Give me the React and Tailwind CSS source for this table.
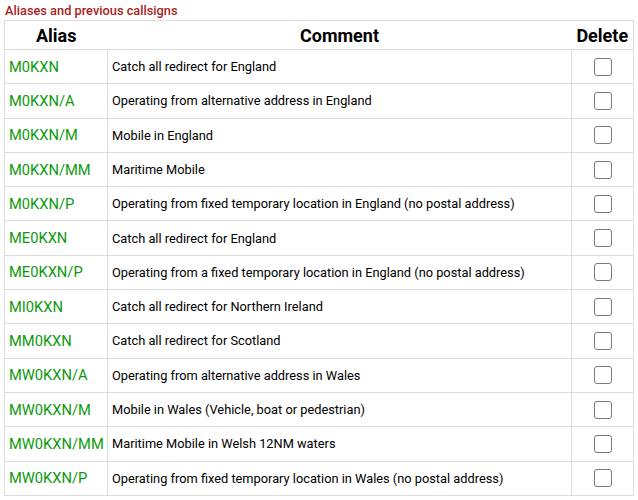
import React from "react";

const rows = [
  ["M0KXN", "Catch all redirect for England"],
  ["M0KXN/A", "Operating from alternative address in England"],
  ["M0KXN/M", "Mobile in England"],
  ["M0KXN/MM", "Maritime Mobile"],
  ["M0KXN/P", "Operating from fixed temporary location in England (no postal address)"],
  ["ME0KXN", "Catch all redirect for England"],
  ["ME0KXN/P", "Operating from a fixed temporary location in England (no postal address)"],
  ["MI0KXN", "Catch all redirect for Northern Ireland"],
  ["MM0KXN", "Catch all redirect for Scotland"],
  ["MW0KXN/A", "Operating from alternative address in Wales"],
  ["MW0KXN/M", "Mobile in Wales (Vehicle, boat or pedestrian)"],
  ["MW0KXN/MM", "Maritime Mobile in Welsh 12NM waters"],
  ["MW0KXN/P", "Operating from fixed temporary location in Wales (no postal address)"],
];

export default function App() {
  return (
    <div className="w-[638px] h-[500px] bg-white font-['Roboto',sans-serif] text-black">
      <div className="pl-[5px] pt-[3px] h-[20px] text-[12.8px] leading-[15px] font-medium text-[#a81e1e]">
        Aliases and previous callsigns
      </div>
      <table className="ml-[4px] w-[630px] border-collapse border border-[#dcdcdc]">
        <thead>
          <tr className="h-[29px] border-b border-[#dcdcdc]">
            <th className="w-[103px] text-[18px] font-bold text-center p-0">Alias</th>
            <th className="text-[18px] font-bold text-center p-0">Comment</th>
            <th className="w-[62px] text-[18px] font-bold text-center p-0">Delete</th>
          </tr>
        </thead>
        <tbody>
          {rows.map(([alias, comment]) => (
            <tr key={alias} className="h-[34.3px] border-b border-[#dcdcdc]">
              <td className="border-r border-[#dcdcdc] pl-[4px] pr-0 text-[14.7px] text-[#0c9a0c] whitespace-nowrap">
                {alias}
              </td>
              <td className="border-r border-[#dcdcdc] pl-[4px] text-[12.8px]">{comment}</td>
              <td>
                <div className="mx-auto w-[18px] h-[18px] rounded-[3px] border border-[#7a7a7a] bg-white" />
              </td>
            </tr>
          ))}
        </tbody>
      </table>
    </div>
  );
}
